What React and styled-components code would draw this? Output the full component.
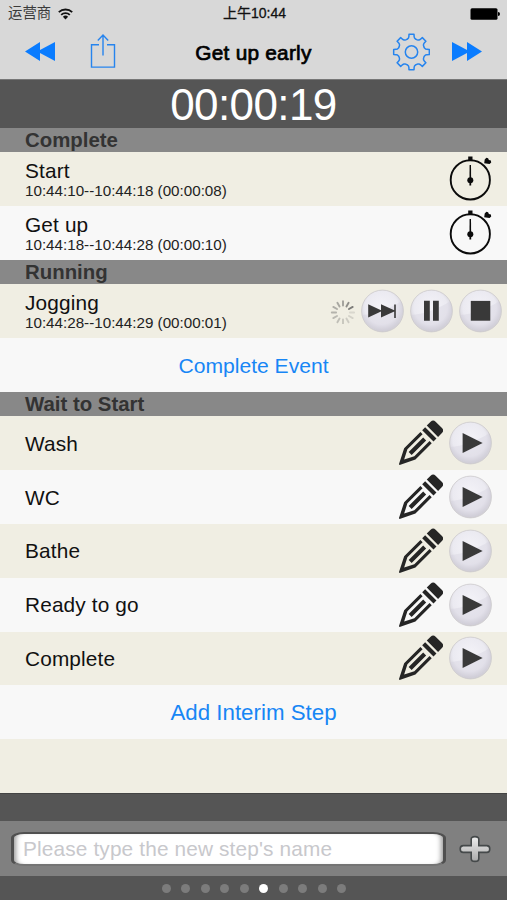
import React from 'react';
import styled, { createGlobalStyle } from 'styled-components';

const GlobalStyle = createGlobalStyle`
  body {
    margin: 0;
    background: #555;
  }

  * {
    box-sizing: border-box;
  }
`

const blue = '#0a7cff';

const Screen = styled('div')`
  display: flex;
  flex-direction: column;
  width: 507px;
  height: 900px;
  overflow: hidden;
  background: #555;
  color: #141414;
  font-family: "Liberation Sans", "Noto Sans CJK SC", sans-serif;
`

const Header = styled('header')`
  flex: none;
  height: 79px;
  background: #d8d8d8;
`

const StatusBar = styled('div')`
  display: grid;
  grid-template-columns: 1fr auto 1fr;
  align-items: center;
  height: 27px;
  padding: 0 7px 0 8px;
  font-size: 14.4px;
  line-height: 27px;
  color: #3a3a3a;
`

const Carrier = styled('span')`
  display: flex;
  align-items: center;
  gap: 7px;
`

const Clock = styled('span')`
  padding-left: 1px;
  font-size: 14px;
  color: #111;
  -webkit-text-stroke: 0.3px #111;
`

const Battery = styled('svg')`
  justify-self: end;
`

const NavBar = styled('nav')`
  display: grid;
  grid-template-columns: 1fr auto 1fr;
  height: 50px;
  padding: 0 25px;
  align-items: center;
`

const NavGroup = styled('div')`
  display: flex;
  align-items: center;
  justify-content: ${props => props.end ? 'flex-end' : 'flex-start'};
  gap: ${props => props.end ? '22px' : '35px'};
  margin-top: -2px;
`

const Title = styled('h1')`
  margin: 1px 0 0;
  font-size: 20.8px;
  line-height: 24px;
  font-weight: 400;
  letter-spacing: 0.25px;
  color: #000;
  -webkit-text-stroke: 0.7px #000;
`

const Timer = styled('div')`
  flex: none;
  height: 49px;
  border-top: 1px solid #777;
  font-size: 44px;
  line-height: 50px;
  text-align: center;
  letter-spacing: -0.6px;
  color: #fff;
`

const SectionTitle = styled('h2')`
  flex: none;
  height: 24.4px;
  margin: 0;
  padding-left: 25px;
  background: #888;
  font-size: 20.4px;
  line-height: 25px;
  font-weight: 700;
  color: #333;
`

const Row = styled('div')`
  flex: none;
  display: flex;
  align-items: center;
  justify-content: space-between;
  height: 53.8px;
  padding: 0 ${props => props.right || 15}px 0 25px;
  background: ${props => props.cream ? '#f0eee3' : '#f8f8f8'};
`

const StepText = styled('div')`
  padding-top: 1px;
`

const StepName = styled('div')`
  font-size: 20.8px;
  line-height: 24px;
  letter-spacing: 0.15px;
  color: #111;
`

const StepTime = styled('div')`
  margin-top: -1px;
  font-size: 15.2px;
  line-height: 18px;
  color: #222;
`

const Actions = styled('div')`
  display: flex;
  align-items: center;
  gap: 6px;
`

const LinkRow = styled(Row)`
  justify-content: center;
  padding: 2px 0 0;
  font-size: ${props => props.size}px;
  color: #1786f5;
`

const Gap = styled('div')`
  flex: none;
  height: 28.2px;
  border-top: 1px solid #444;
`

const InputBar = styled('div')`
  flex: none;
  display: flex;
  align-items: center;
  gap: 13px;
  height: 55px;
  padding: 0 0 0 11px;
  background: #808080;
`

const NameInput = styled('input')`
  width: 435px;
  height: 34px;
  padding: 0 0 0 9px;
  border: 2px solid #505050;
  border-left-width: 3px;
  border-right-width: 3px;
  border-bottom-color: #747474;
  border-radius: 13px / 6px;
  outline: none;
  background: #fff;
  box-shadow: inset 6px 0 5px -4px #999, inset -6px 0 5px -4px #999;
  font-family: inherit;
  font-size: 20.8px;
  letter-spacing: 0.15px;

  &::placeholder {
    color: #c8c8cc;
    opacity: 1;
  }
`

const Pager = styled('div')`
  flex: 1;
  display: flex;
  align-items: center;
  justify-content: center;
  gap: 10.5px;
  padding-left: 1px;
`

const Dot = styled('span')`
  width: 9px;
  height: 9px;
  border-radius: 50%;
  background: ${props => props.active ? '#fff' : '#7c7c7c'};
`

function WifiIcon() {
  return (
    <svg width="15" height="12" viewBox="0 0 15 12" fill="none" stroke="#111" strokeWidth="1.8">
      <path d="M0.8 4.2a9.6 9.6 0 0 1 13.4 0" />
      <path d="M3.2 6.9a6.2 6.2 0 0 1 8.6 0" />
      <path d="M7.5 11.5L4.9 8.8a3.8 3.8 0 0 1 5.2 0z" fill="#111" stroke="none" />
    </svg>
  );
}

function SeekIcon({ forward }) {
  return (
    <svg width="30" height="19" viewBox="0 0 30 19" fill={blue}>
      <path d={forward ? 'M0 0l15 8V0l15 9.4L15 19V11L0 19z' : 'M30 0L15 8V0L0 9.4 15 19V11l15 8z'} />
    </svg>
  );
}

function ShareIcon() {
  return (
    <svg width="26" height="36" viewBox="0 -0.5 26 36" fill="none" stroke="#2684ee" strokeWidth="1.4">
      <path d="M9 11.2H1.5v22.4h23V11.2H17M13 22V2M7.8 7L13 1.6 18.2 7" />
    </svg>
  );
}

// outline of one tooth as [angle, radius], repeated eight times round
const tooth = [[-17, 13.6], [-12, 14.4], [-9.7, 15.6], [-8, 18], [8, 18], [9.7, 15.6], [12, 14.4], [17, 13.6], [22.5, 13.4]];

function GearIcon() {
  const points = [];
  for (let i = 0; i < 8; i++) {
    tooth.forEach(([angle, r]) => {
      const a = (i * 45 + angle) * Math.PI / 180;
      points.push(`${(19.5 + r * Math.sin(a)).toFixed(2)},${(20 - r * Math.cos(a)).toFixed(2)}`);
    });
  }
  return (
    <svg width="38" height="39" viewBox="0 0 38 39" fill="none" stroke="#2684ee" strokeWidth="1.5" strokeLinejoin="round">
      <polygon points={points.join(' ')} />
      <circle cx="19.5" cy="20" r="6.2" />
    </svg>
  );
}

function StopwatchIcon() {
  return (
    <svg width="44" height="48" viewBox="0 0 44 48" fill="#0b0b0b">
      <circle cx="22.3" cy="24.9" r="19.6" fill="none" stroke="#0b0b0b" strokeWidth="1.9" />
      <path d="M20.2 1.4h4.3V6h-4.3zM36.2 8.2l.5-3.6 1.7-1.9 1.7.5.8 1.7 2 .7.3 1.9-1.6 1.4z" />
      <path d="M21.6 10h1.4l.2 20.6h-1.8z" />
      <circle cx="22.3" cy="25.2" r="3" />
    </svg>
  );
}

function PencilIcon() {
  return (
    <svg width="45" height="46" viewBox="0 0 45 46" fill="#252525">
      <g transform="translate(1.2 44.5) rotate(-45)">
        <path d="M0-.4L15-8H38v3.1H16.5L7 0 16.5 4.9H38V8H15L0 .6z" />
        <path d="M15.5-2.1H36v4.2H15.5zM40.5-8h4.2V8h-4.2z" />
        <path d="M47-8h5.4Q56-8 56-4.5v9Q56 8 52.4 8H47z" />
      </g>
    </svg>
  );
}

const glyphs = {
  play: <path d="M14.6 13l20 10-20 10z" />,
  next: <path d="M8.2 16.2l12.8 6v-6l13.2 6V16.5h1.6v13.6h-1.6v-6.5l-13.2 6v-6l-12.8 6z" />,
  pause: <path d="M15 12.7h5.8v20H15zM24 12.7h5.8v20H24z" />,
  stop: <path d="M12.8 12.9h19.5v19.8H12.8z" />,
};

function RoundButton({ name }) {
  const id = `orb-${name}`;
  return (
    <svg width="43" height="44" viewBox="1 1 43 44" fill="#393939">
      <defs>
        <radialGradient id={id} cx="48%" cy="42%" r="57%">
          <stop offset="0" stopColor="#f4f3f8" />
          <stop offset="0.7" stopColor="#ebeaf1" />
          <stop offset="1" stopColor="#d0ced6" />
        </radialGradient>
      </defs>
      <circle cx="22.5" cy="23" r="20.9" fill={`url(#${id})`} stroke="#ccc9cc" strokeWidth="0.8" />
      <path d="M2.5 27C14 26 28 22 41.5 13Q47 27 34 39 20 48 7 36 3 32 2.5 27z" fill="#c8c5d2" opacity="0.25" />
      {glyphs[name]}
    </svg>
  );
}

function Spinner() {
  return (
    <svg width="26" height="26" viewBox="0 0 26 26" stroke="#555" strokeWidth="1.9" strokeLinecap="round">
      {Array.from({ length: 12 }, (_, i) => (
        <line
          key={i}
          x1="14"
          y1="3.3"
          x2="14"
          y2="7.6"
          opacity={i < 3 ? 0.5 + i * 0.12 : 0.14 + (i - 3) * 0.04}
          transform={`rotate(${i * 30} 14 14.5)`}
        />
      ))}
    </svg>
  );
}

function PlusIcon() {
  return (
    <svg width="32" height="28" viewBox="0 0 32 28">
      <defs>
        <linearGradient id="plus" x2="0" y2="1">
          <stop offset="0" stopColor="#eee" />
          <stop offset="1" stopColor="#aaa" />
        </linearGradient>
      </defs>
      <path
        d="M12.2 4.3Q12.2 1.6 16 1.6t3.8 2.7v6.3h8q3 0 3 3.4t-3 3.4h-8v6.3q0 2.7-3.8 2.7t-3.8-2.7v-6.3h-8q-3 0-3-3.4t3-3.4h8z"
        fill="url(#plus)"
        stroke="#45494a"
        strokeWidth="1.6"
      />
    </svg>
  );
}

const completed = [
  { name: 'Start', time: '10:44:10--10:44:18 (00:00:08)' },
  { name: 'Get up', time: '10:44:18--10:44:28 (00:00:10)' },
];

const waiting = ['Wash', 'WC', 'Bathe', 'Ready to go', 'Complete'];

function Step({ name, time }) {
  return (
    <StepText>
      <StepName>{name}</StepName>
      {time && <StepTime>{time}</StepTime>}
    </StepText>
  );
}

export default function App() {
  return (
    <>
      <GlobalStyle />
      <Screen>
        <Header>
          <StatusBar>
            <Carrier>运营商 <WifiIcon /></Carrier>
            <Clock>上午10:44</Clock>
            <Battery width="30" height="12" viewBox="0 0 30 12" fill="#000">
              <rect x="0.5" y="0.3" width="27" height="11.4" rx="1.5" />
              <path d="M28 4q2 0 2 2t-2 2z" />
            </Battery>
          </StatusBar>
          <NavBar>
            <NavGroup>
              <SeekIcon />
              <ShareIcon />
            </NavGroup>
            <Title>Get up early</Title>
            <NavGroup end>
              <GearIcon />
              <SeekIcon forward />
            </NavGroup>
          </NavBar>
        </Header>
        <Timer>00:00:19</Timer>

        <SectionTitle>Complete</SectionTitle>
        {completed.map((step, i) => (
          <Row key={step.name} cream={i % 2 === 0}>
            <Step {...step} />
            <StopwatchIcon />
          </Row>
        ))}

        <SectionTitle>Running</SectionTitle>
        <Row cream right={5}>
          <Step name="Jogging" time="10:44:28--10:44:29 (00:00:01)" />
          <Actions>
            <Spinner />
            <RoundButton name="next" />
            <RoundButton name="pause" />
            <RoundButton name="stop" />
          </Actions>
        </Row>
        <LinkRow size={21.1}>Complete Event</LinkRow>

        <SectionTitle>Wait to Start</SectionTitle>
        {waiting.map((name, i) => (
          <Row key={name} cream={i % 2 === 0}>
            <Step name={name} />
            <Actions>
              <PencilIcon />
              <RoundButton name="play" />
            </Actions>
          </Row>
        ))}
        <LinkRow size={22.3}>Add Interim Step</LinkRow>
        <Row cream />

        <Gap />
        <InputBar>
          <NameInput placeholder="Please type the new step's name" />
          <PlusIcon />
        </InputBar>
        <Pager>
          {Array.from({ length: 10 }, (_, i) => <Dot key={i} active={i === 5} />)}
        </Pager>
      </Screen>
    </>
  );
}
